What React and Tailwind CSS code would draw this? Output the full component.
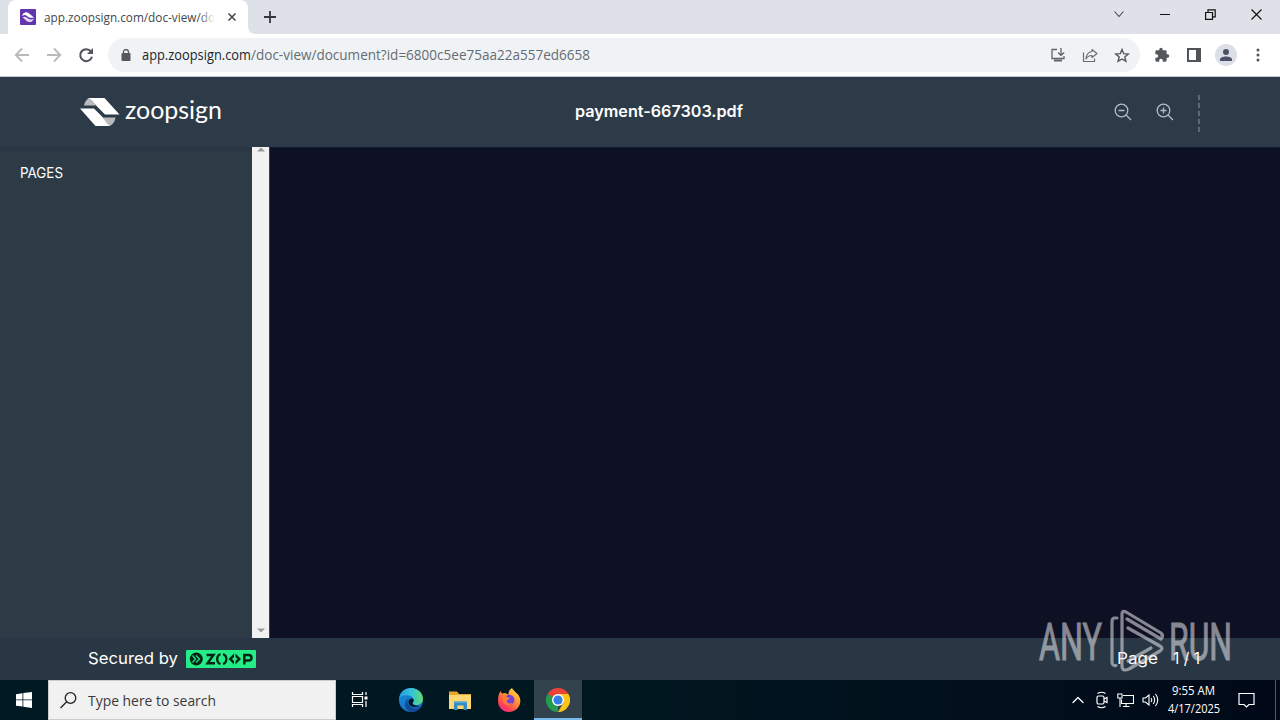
import { ChevronUp } from "lucide-react";

const Fit = ({ children, width, size, height, baseline, className = "", family = "Open Sans", weight = 400, fill = "currentColor" }) => (
  <svg width={width} height={height} className={`block shrink-0 overflow-visible ${className}`}>
    <text x="0" y={baseline} textLength={width} lengthAdjust="spacingAndGlyphs" fontFamily={`"${family}", sans-serif`} fontSize={size} fontWeight={weight} fill={fill}>
      {children}
    </text>
  </svg>
);

const Slot = ({ children, className = "w-8" }) => (
  <div className={`flex h-full shrink-0 items-center justify-center ${className}`}>{children}</div>
);

// ── Browser tab strip ──
const TabStrip = () => (
  <div className="flex h-[34px] bg-[#dee1e8] pl-2">
    <div className="flex h-full w-60 items-center rounded-t-lg bg-white pl-3">
      <svg width="16" height="16" viewBox="0 0 16 16">
        <rect width="16" height="16" rx="1" fill="#6335b0" />
        <path d="M2 7C3 3.500 6 2.500 8.500 4L14 8.500C11 9.200 9 8.800 7 7C5.500 5.700 4 5.800 2 7Z" fill="#fff" />
        <path d="M2.500 8.300C5 7 6 8 8 9.500C10 11 12 10.500 14 9.500C12.500 13 9.500 14 7 12.300Z" fill="#e4d9f5" />
      </svg>
      <div className="relative ml-2">
        <Fit width={171} height={16} baseline={12.500} size={12} fill="#43474b">app.zoopsign.com/doc-view/do</Fit>
        <div className="absolute right-0 top-0 h-4 w-4 bg-linear-to-r from-transparent to-white" />
      </div>
      <svg width="10" height="10" viewBox="0 0 10 10" className="ml-[12px]" stroke="#45484c" strokeWidth="1.600">
        <path d="M1.500 1.500 8.500 8.500M8.500 1.500 1.500 8.500" />
      </svg>
    </div>
    <svg width="8" height="8" className="self-end" viewBox="0 0 8 8"><path d="M0 0V8H8Q0 8 0 0Z" fill="#fff" /></svg>
    <svg width="12" height="12" viewBox="0 0 12 12" className="ml-[8px] mt-[11px]" stroke="#35383d" strokeWidth="1.800">
      <path d="M6 0V12M0 6H12" />
    </svg>
    <div className="ml-auto flex h-[29px]">
      <Slot className="w-[46px]">
        <svg width="12" height="8" className="-translate-y-px" fill="none" stroke="#42464c" strokeWidth="1.100"><path d="M1.500 1.500 6 6.500 10.500 1.500" /></svg>
      </Slot>
      <Slot className="w-[46px]">
        <svg width="10" height="10"><path d="M0 4.500H10" stroke="#111" /></svg>
      </Slot>
      <Slot className="w-[46px]">
        <svg width="11" height="11" className="-translate-x-px" fill="none" stroke="#111" strokeWidth="1.200"><path d="M.6 3.500H7.500V10.400H.6ZM3 3.500V.8H10.200V7.800H7.500" /></svg>
      </Slot>
      <Slot className="w-[46px]">
        <svg width="11" height="11" className="-translate-x-px" stroke="#111" strokeWidth="1.200"><path d="M.5 .5 10.500 10.500M10.500 .5 .5 10.500" /></svg>
      </Slot>
    </div>
  </div>
);

// ── Address bar ──
const Toolbar = () => (
  <div className="flex h-[43px] items-center border-b border-[#c5cbd3] bg-white pl-1.5 pr-1.5">
    <Slot>
      <svg width="16" height="16" fill="none" stroke="#b8babd" strokeWidth="1.800"><path d="M15 8H2M8 1.500 1.700 8 8 14.500" /></svg>
    </Slot>
    <Slot>
      <svg width="16" height="16" fill="none" stroke="#b8babd" strokeWidth="1.800"><path d="M1 8H14M8 1.500 14.300 8 8 14.500" /></svg>
    </Slot>
    <Slot>
      <svg width="16" height="16" viewBox="0 0 16 16"><path d="M13 4.500A6 6 0 1 0 14 9.800" fill="none" stroke="#505359" strokeWidth="2" /><path d="M15 1V7H9Z" fill="#505359" /></svg>
    </Slot>
    <div className="ml-1.5 flex h-[34px] w-[1032px] items-center rounded-full bg-[#f0f3f6] pl-[13px]">
      <svg width="10" height="12" viewBox="0 0 10 12"><rect x=".5" y="4" width="9" height="8" rx="1" fill="#55585d" /><path d="M2.500 5V3a2.500 2.500 0 0 1 5 0V5" fill="none" stroke="#55585d" strokeWidth="1.300" /></svg>
      <div className="ml-[11px] flex">
        <Fit width={109} height={20} baseline={15} size={14} fill="#22262a">app.zoopsign.com</Fit>
        <Fit width={339} height={20} baseline={15} size={14} fill="#666c72">/doc-view/document?id=6800c5ee75aa22a557ed6658</Fit>
      </div>
      <div className="ml-auto mr-0.5 flex">
        <Slot>
          <svg width="16" height="14" viewBox="0 0 16 14" fill="none" stroke="#5f6368" strokeWidth="1.300">
            <path d="M7 1.500H2V10.500H14V8M11 0V7M8 4.500 11 7.300 14.200 4.500" /><path d="M4 12.500H12" strokeWidth="2" />
          </svg>
        </Slot>
        <Slot>
          <svg width="16" height="15" viewBox="0 0 16 15" fill="none" stroke="#6a6e73" strokeWidth="1.200">
            <path d="M1.500 4.500V13.500H12.500V10.500M10 1.500 15 5.500 10 9.500V7.500C7 7.300 5.500 8.500 4 11C4.300 7 6 4 10 3.500Z" strokeLinejoin="round" />
          </svg>
        </Slot>
        <Slot>
          <svg width="16" height="15" viewBox="0 0 16 15" fill="none" stroke="#53575c" strokeWidth="1.400">
            <path d="M8 1.500 9.700 5.700 14.300 6.100 10.800 9 11.900 13.300 8 11 4.100 13.300 5.200 9 1.700 6.100 6.300 5.700Z" />
          </svg>
        </Slot>
      </div>
    </div>
    <div className="ml-1.5 flex h-full">
      <Slot>
        <svg width="16" height="16" viewBox="0 0 24 24" fill="#54585d"><path d="M20.500 11H19V7a2 2 0 0 0-2-2h-4V3.500a2.500 2.500 0 0 0-5 0V5H4a2 2 0 0 0-2 2v3.800h1.500a2.700 2.700 0 0 1 0 5.400H2V20a2 2 0 0 0 2 2h3.800v-1.500a2.700 2.700 0 0 1 5.400 0V22H17a2 2 0 0 0 2-2v-4h1.500a2.500 2.500 0 0 0 0-5z" /></svg>
      </Slot>
      <Slot>
        <svg width="14" height="14"><rect x="1" y="1" width="12" height="12" fill="none" stroke="#505358" strokeWidth="2" /><path d="M9 1H13V13H9Z" fill="#505358" /></svg>
      </Slot>
      <Slot>
        <div className="flex size-[22px] items-center justify-center rounded-full bg-[#dcdfe8]">
          <svg width="12" height="12" fill="#4c5266"><circle cx="6" cy="3" r="3" /><path d="M0 12V10.500C0 8.500 3 7.500 6 7.500S12 8.500 12 10.500V12Z" /></svg>
        </div>
      </Slot>
      <Slot>
        <svg width="4" height="14" fill="#505358"><circle cx="2" cy="2" r="1.500" /><circle cx="2" cy="7" r="1.500" /><circle cx="2" cy="12" r="1.500" /></svg>
      </Slot>
    </div>
  </div>
);

const ZoomIcon = ({ plus }) => (
  <svg width="18" height="18" viewBox="0 0 18 18" fill="none" stroke="#b2bec8" strokeWidth="1.300">
    <circle cx="7.500" cy="7.500" r="6.300" />
    <path d="M12 12 17 17M4.500 7.500H10.500" />
    {plus && <path d="M7.500 4.500V10.500" />}
  </svg>
);

const DocHeader = () => (
  <div className="flex h-[70px] items-center bg-[#2d3b48] px-20 text-white">
    <svg width="40" height="28" viewBox="0 0 40 28">
      <path d="M4 7.500C5 3 7 0 12 0L16 7.500Z" fill="#b9babd" />
      <path d="M8 .1H24.500L39.500 16.500H25L17 8.500C14.500 5.500 12 0 7 .2Z" fill="#fff" />
      <path d="M35.500 19.500C34.500 25 32 28 27 28L23 19.500Z" fill="#b9babd" />
      <path d="M0 10.500H14L22 18.500C25 21.500 27 28 31.500 28H15.500Z" fill="#fff" />
    </svg>
    <Fit width={97} height={30} baseline={22} size={25} family="Lato" className="ml-[5px]">zoopsign</Fit>
    <Fit width={168} height={20} baseline={15} size={16} weight={600} family="Inter" className="ml-[353px]">payment-667303.pdf</Fit>
    <div className="ml-auto flex items-center gap-6">
      <ZoomIcon />
      <ZoomIcon plus />
      <svg width="2" height="37" className="translate-y-px"><path d="M1 0V37" stroke="#5c6873" strokeWidth="2" strokeDasharray="5 3" /></svg>
    </div>
  </div>
);

const Viewer = () => (
  <div className="flex h-[491px]">
    <div className="w-[252px] bg-[#2d3b47] bg-linear-to-b from-[#283541] to-[#2d3b47] to-[6px] pl-5 pt-4 text-white">
      <Fit width={43} height={20} baseline={15} size={14} family="Inter">PAGES</Fit>
    </div>
    <div className="flex w-[17px] flex-col items-center justify-between bg-[#f1f1f2] pb-[5px]">
      <svg width="8" height="5" fill="#9b9b9b"><path d="M0 4.500 4 .5 8 4.500Z" /></svg>
      <svg width="8" height="5" fill="#9b9b9b"><path d="M0 .5 4 4.500 8 .5Z" /></svg>
    </div>
    <div className="flex-1 border-l border-t border-[#121c2e] border-l-[#33415a] bg-[#0e1023]" />
  </div>
);

const DocFooter = () => (
  <div className="flex h-[42px] items-center bg-[#293744] pl-[88px] pr-20 text-white">
    <Fit width={90} height={20} baseline={15} size={16.500} family="Inter">Secured by</Fit>
    <svg width="70" height="18" viewBox="0 0 70 18" className="ml-2">
      <rect width="70" height="18" rx="1" fill="#24ec86" />
      <circle cx="10.300" cy="9" r="6.500" fill="#072517" />
      <path d="M6.500 5.500 9.500 9 6.500 12.500M10 5.500 13.500 9 10 12.500" fill="none" stroke="#24ec86" strokeWidth="1.200" />
      <path d="M20.500 5H27.500L21.500 13.200H29" fill="none" stroke="#072517" strokeWidth="2.400" />
      <path d="M34.500 4C30 5.500 30 12.500 34.500 14M37 4C41.500 5.500 41.500 12.500 37 14" fill="none" stroke="#072517" strokeWidth="2.200" />
      <path d="M48 3.500V7L46 9 48 11V14.500L42.500 9ZM49.500 3.500 55 9 49.500 14.500V11L51.500 9 49.500 7Z" fill="#072517" />
      <path d="M58.300 14.500V5H62.500C66.500 5 66.500 10.500 62.500 10.500H58.500" fill="none" stroke="#072517" strokeWidth="2.500" />
    </svg>
    <div className="ml-auto flex">
      <Fit width={41} height={20} baseline={15} size={16.500} family="Inter">Page</Fit>
      <Fit width={27} height={20} baseline={15} size={16.500} family="Inter" className="ml-[15px]">1 / 1</Fit>
    </div>
  </div>
);

const EdgeIcon = () => (
  <svg width="24" height="24" viewBox="0 0 24 24">
    <defs>
      <linearGradient id="edgeTop" x1="0" x2="1"><stop stopColor="#279ce8" /><stop offset=".55" stopColor="#36c4d4" /><stop offset="1" stopColor="#63db69" /></linearGradient>
      <linearGradient id="edgeBase" y1="0" y2="1"><stop stopColor="#168bdd" /><stop offset="1" stopColor="#1666ba" /></linearGradient>
    </defs>
    <circle cx="12" cy="12" r="12" fill="url(#edgeBase)" />
    <path d="M.2 10C1.500 3.500 6 0 12 0C19 0 24 5 24 11C24 15 20.500 17 17 17C14.500 17 13 16 14 14.500C16 11 13.500 8 9.500 7.500C5.500 7 2 8 .2 10Z" fill="url(#edgeTop)" />
    <path d="M9.300 10.500C7 14 10 20.500 17 20.300C19.500 20.200 21.500 19 23 17.800C21 21.500 17 24 12.500 24C6 23 3.500 15 9.300 10.500Z" fill="#124b94" />
    <path d="M13.300 10.500C10.500 10 9 12.500 9.500 14.500C10 18.500 16 20.500 21 18C17 18 13 17 13.500 14.800C15.500 13 15 11.500 13.300 10.500Z" fill="#011723" />
  </svg>
);

const FolderIcon = () => (
  <svg width="22" height="19" viewBox="0 0 22 19">
    <path d="M0 .5H8L10 3H22V18H0Z" fill="#e9a52f" />
    <path d="M0 4H22V18H0Z" fill="#ffd873" />
    <path d="M5 19V10.500H18V19H14.500V14.500H8.500V19Z" fill="#358bc2" />
    <path d="M5 10.500H18V12H5Z" fill="#56add9" />
  </svg>
);

const FirefoxIcon = () => (
  <svg width="24" height="24" viewBox="0 0 24 24">
    <defs><linearGradient id="fox" x1=".9" x2=".2" y2="1"><stop stopColor="#ffe44a" /><stop offset=".4" stopColor="#ff9832" /><stop offset=".8" stopColor="#ff3e56" /><stop offset="1" stopColor="#e8279b" /></linearGradient></defs>
    <path d="M2 6 3.500 3 5 5.500 7.500 5C9.500 5 10.500 6 11.500 7C11 4 13 1 15 0C16 3 21 5 22.500 9C25.500 16 20 24 12 24C5 24 .8 18.500 1 12.500C1 10 1.500 8 2 6Z" fill="url(#fox)" />
    <circle cx="12.300" cy="12" r="5.200" fill="#7542d7" />
    <path d="M5 9C7 7.500 9 8 10.500 9.500L13 10C12 12 10 11.500 9.500 13C10 15.500 13 16.500 16 14.500C14 19 7 18 6 13Z" fill="#ff7c35" />
  </svg>
);

const ChromeIcon = () => (
  <svg width="24" height="24" viewBox="0 0 24 24">
    <path d="M12 12 1.600 6A12 12 0 0 1 22.400 6Z" fill="#ea4335" />
    <path d="M12 12H12V24A12 12 0 0 1 1.600 6Z" fill="#259b4d" />
    <path d="M12 6H22.400A12 12 0 0 1 12 24L17.200 15Z" fill="#fbc417" />
    <circle cx="12" cy="12" r="6" fill="#fff" />
    <circle cx="12" cy="12" r="4.600" fill="#347fe5" />
  </svg>
);

const Taskbar = () => (
  <div className="flex h-10 bg-linear-to-r from-[#011923] via-[#011720] to-[#010918] text-white">
    <Slot className="w-12">
      <svg width="16" height="16" fill="#fff"><path d="M0 2.200 6.500 1.200V7.400H0ZM7.300 1.100 16 0V7.400H7.300ZM0 8.300H6.500V14.600L0 13.700ZM7.300 8.300H16V16L7.300 14.800Z" /></svg>
    </Slot>
    <div className="flex w-72 items-center border border-[#c9ccce] bg-[#f1f1f1] pl-[11px]">
      <svg width="17" height="17" fill="none" stroke="#202020" strokeWidth="1.300"><circle cx="10.500" cy="6" r="5.300" /><path d="M6.700 9.800 .5 16" /></svg>
      <Fit width={128} height={20} baseline={16} size={15} fill="#3a3a3a" className="ml-[11px]">Type here to search</Fit>
    </div>
    <Slot className="w-12">
      <svg width="17" height="17" className="-translate-x-px -translate-y-px" fill="none" stroke="#fff" strokeWidth="1.200"><path d="M1.500 1V3.500H11.500V1M1.500 16V13.500H11.500V16M1.500 5.500H11.500V11.500H1.500ZM15 1V4M15 10V16" /><path d="M13.500 5.500H16.500V8.500H13.500Z" fill="#fff" stroke="none" /></svg>
    </Slot>
    <Slot className="ml-[3px] w-12"><EdgeIcon /></Slot>
    <Slot className="ml-px w-12"><FolderIcon /></Slot>
    <Slot className="ml-px w-12"><FirefoxIcon /></Slot>
    <Slot className="ml-px w-12 border-b-2 border-[#76b9ed] bg-[#33434e] pt-0.5"><ChromeIcon /></Slot>
    <div className="ml-auto flex">
      <Slot className="w-6"><ChevronUp size={20} strokeWidth={1.5} /></Slot>
      <Slot className="w-6">
        <svg width="14" height="18" fill="none" stroke="#fff" strokeWidth="1.200"><rect x="2" y="5" width="7" height="8" rx="1.500" /><path d="M9 8 12 6.500V11.500L9 10M2.500 2.500Q6.500 0 10.500 2.500M2.500 15.500Q6.500 18 10.500 15.500" /></svg>
      </Slot>
      <Slot className="w-6">
        <svg width="17" height="15" className="-translate-x-px" fill="none" stroke="#fff" strokeWidth="1.100"><path d="M6 2.500H16.500V10.500H4.500V6.500M.8 1H5V5H.8ZM3 5V14M9 10.500V13.500M6 13.500H12.500" /></svg>
      </Slot>
      <Slot className="w-6">
        <svg width="17" height="14" fill="none" stroke="#fff" strokeWidth="1.100"><path d="M1 5H3.500L7 2V12L3.500 9H1ZM9 5Q10.500 7 9 9M11.300 3Q14 7 11.300 11M13.500 1Q18 7 13.500 13" /></svg>
      </Slot>
      <div className="flex w-[63px] flex-col items-center gap-[2px] pt-[3px]">
        <Fit width={43} height={16} baseline={12} size={12}>9:55 AM</Fit>
        <Fit width={52} height={16} baseline={12} size={12}>4/17/2025</Fit>
      </div>
      <Slot className="w-[42px]">
        <svg width="17" height="17" fill="none" stroke="#fff" strokeWidth="1.200"><path d="M1 1.500H16V12.500H11L8.500 15L6 12.500H1Z" /></svg>
      </Slot>
      <div className="ml-[8px] mr-[4px] w-px bg-[#4f5965]" />
    </div>
  </div>
);

// Overlay branding in the lower right corner
const Watermark = () => (
  <svg width="204" height="72" viewBox="0 0 204 72" className="pointer-events-none absolute left-[1037px] top-[608px] opacity-55" fill="#e9e9ed">
    <g stroke="#e9e9ed" strokeWidth="1" fontFamily="Roboto, sans-serif" fontSize="52">
      <text x="2" y="51.500" textLength="63" lengthAdjust="spacingAndGlyphs">ANY</text>
      <text x="132" y="51.500" textLength="63" lengthAdjust="spacingAndGlyphs">RUN</text>
    </g>
    <g fill="none" stroke="#e9e9ed" strokeWidth="3.200" strokeLinejoin="round" strokeLinecap="round">
      <path d="M80 10H77Q75 10.500 75 14V54Q75 58 79 57.500" />
      <path d="M85 54V6Q85 2 89 4L124 25Q127 28 124 31L90 11M91 20 123 38Q127 40 123 43L92 61Q85 64 85 58V54M91 53 114 40" />
    </g>
  </svg>
);

const App = () => (
  <div className="relative h-[720px] w-[1280px] overflow-hidden">
    <TabStrip />
    <Toolbar />
    <DocHeader />
    <Viewer />
    <DocFooter />
    <Taskbar />
    <Watermark />
  </div>
);

export default App;
